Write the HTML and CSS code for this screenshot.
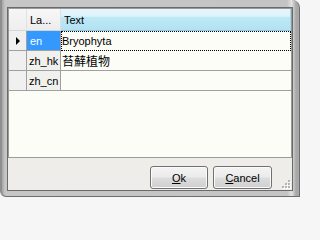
FILE: index.html
```html
<!DOCTYPE html>
<html>
<head>
<meta charset="utf-8">
<link rel="stylesheet" href="styles.css">
</head>
<body>
<div class="win">
  <div class="client">
    <div class="grid">
      <div class="row hdr">
        <div class="rh corner"></div>
        <div class="cell lang hcell">La...</div>
        <div class="cell text hcell hsel">Text</div>
      </div>
      <div class="row">
        <div class="rh"><span class="arrow"></span></div>
        <div class="cell lang selected">en</div>
        <div class="cell text focus">Bryophyta</div>
      </div>
      <div class="row">
        <div class="rh"></div>
        <div class="cell lang">zh_hk</div>
        <div class="cell text cjk">苔蘚植物</div>
      </div>
      <div class="row">
        <div class="rh"></div>
        <div class="cell lang">zh_cn</div>
        <div class="cell text"></div>
      </div>
    </div>
    <div class="panel">
      <button class="btn ok"><u>O</u>k</button>
      <button class="btn cancel"><u>C</u>ancel</button>
      <svg class="grip" width="10" height="10" viewBox="0 0 10 10">
        <g fill="#ffffff">
          <rect x="8" y="8" width="2" height="2"/><rect x="5" y="8" width="2" height="2"/><rect x="2" y="8" width="2" height="2"/>
          <rect x="8" y="5" width="2" height="2"/><rect x="5" y="5" width="2" height="2"/>
          <rect x="8" y="2" width="2" height="2"/>
        </g>
        <g fill="#b4b4b0">
          <rect x="7" y="7" width="2" height="2"/><rect x="4" y="7" width="2" height="2"/><rect x="1" y="7" width="2" height="2"/>
          <rect x="7" y="4" width="2" height="2"/><rect x="4" y="4" width="2" height="2"/>
          <rect x="7" y="1" width="2" height="2"/>
        </g>
      </svg>
    </div>
  </div>
</div>
</body>
</html>
```
FILE: styles.css
```css
html, body {
  margin: 0;
  padding: 0;
  background: #f6f6f6;
}
body {
  width: 300px;
  height: 200px;
  overflow: hidden;
  font-family: "Liberation Sans", Arial, sans-serif;
  font-size: 11px;
  color: #000;
}
.win {
  width: 300px;
  height: 197px;
  box-sizing: border-box;
  display: flex;
  background: linear-gradient(to right, #a4a4a4 0, #c6c6c6 3px, #c4c4c4 96%, #e2e2e2 97.5%, #a8a8a8 99%);
  border-left: 2px solid #8e8e8e;
  border-right: 1px solid #6e6e6e;
  border-bottom: 1px solid #6e6e6e;
  border-radius: 0 8px 0 6px;
  padding: 7px 6px 5px 5px;
}
.client {
  flex: 1;
  display: flex;
  flex-direction: column;
  border: 1px solid #6a6a6a;
  background: #eeede9;
  min-width: 0;
}
.grid {
  height: 150px;
  box-sizing: border-box;
  border: 1px solid #9a9a9a;
  background: #fdfdf8;
  display: flex;
  flex-direction: column;
}
.row {
  display: flex;
  height: 20px;
  box-sizing: border-box;
}
.row.hdr {
  height: 22px;
}
.rh {
  width: 18px;
  flex: none;
  box-sizing: border-box;
  background: #f0f0f0;
  border-right: 1px solid #a0a0a0;
  border-bottom: 1px solid #a0a0a0;
  display: flex;
  align-items: center;
  justify-content: center;
}
.corner {
  background: linear-gradient(#f6f6f6, #eeeeee);
  border-bottom: 1px solid #d6d6d6;
  border-right: 1px solid #e2e2e2;
}
.arrow {
  width: 0;
  height: 0;
  border-top: 4px solid transparent;
  border-bottom: 4px solid transparent;
  border-left: 4px solid #000;
  margin-left: 1px;
}
.cell {
  box-sizing: border-box;
  border-bottom: 1px solid #a0a0a0;
  display: flex;
  align-items: center;
  white-space: nowrap;
  overflow: hidden;
}
.lang {
  width: 34px;
  flex: none;
  padding-left: 2px;
  border-right: 1px solid #a0a0a0;
  background: #f0f0ec;
}
.text {
  flex: 1;
  padding-left: 1px;
  background: #fdfdf8;
}
.hcell {
  padding-left: 3px;
  background: linear-gradient(#f7f7f7, #ededed);
  border-bottom: 1px solid #d5d5d5;
  border-right: 1px solid #e0e0e0;
}
.hsel {
  background: linear-gradient(#e4f6fc 0, #dcf3fa 35%, #bde8f6 40%, #b2e3f3 100%);
  border-bottom: 1px solid #8cc9e2;
  border-right: 1px solid #a6d8ea;
}
.selected {
  background: #3399ff;
  color: #fff;
  padding-left: 3px;
}
.focus {
  border: 1px dotted #000;
  padding-left: 0;
}
.cjk {
  font-family: "Noto Sans CJK TC", "Noto Sans CJK SC", sans-serif;
  font-size: 12px;
}
.panel {
  flex: 1;
  position: relative;
  display: flex;
  justify-content: flex-end;
  align-items: flex-start;
  gap: 5px;
  padding: 8px 20px 0 0;
}
.btn {
  height: 23px;
  box-sizing: border-box;
  border: 1px solid #707070;
  border-radius: 3px;
  background: linear-gradient(#f3f3f3 0, #ebebeb 48%, #dddddd 52%, #cfcfcf 100%);
  font-family: "Liberation Sans", Arial, sans-serif;
  font-size: 11px;
  color: #000;
  padding: 0;
  margin: 0;
  box-shadow: inset 0 0 0 1px #fbfbfb;
}
.btn u {
  text-decoration: underline;
}
.ok {
  width: 58px;
}
.cancel {
  width: 59px;
}
.grip {
  position: absolute;
  right: 1px;
  bottom: 1px;
}
```
